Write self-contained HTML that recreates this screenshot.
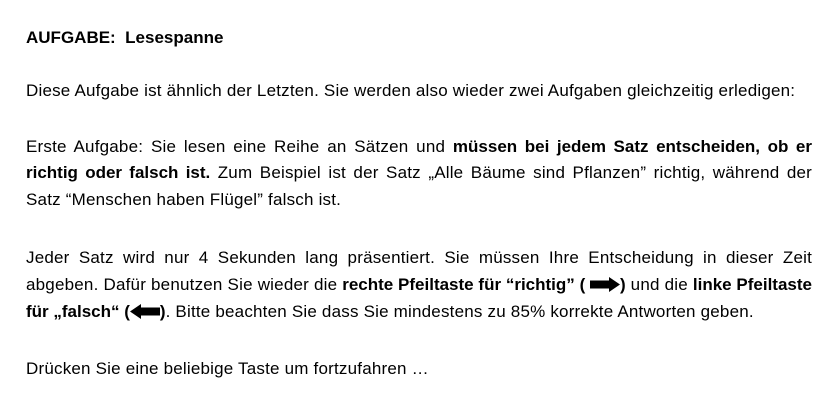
<!DOCTYPE html>
<html><head><meta charset="utf-8"><style>
body{margin:0;width:837px;height:405px;background:#fff;overflow:hidden;font-family:"Liberation Sans",Arial,sans-serif;font-size:17px;letter-spacing:0.2px;color:#000}
.l{position:absolute;left:26px;width:786px;line-height:20px;white-space:nowrap}
.j{text-align:justify;text-align-last:justify;white-space:normal}
b{font-weight:bold;letter-spacing:0}
.ar{display:inline-block;vertical-align:-2px}
</style></head><body>
<div class="l" style="top:28px"><b>AUFGABE:&nbsp; Lesespanne</b></div>
<div class="l" style="top:81px">Diese Aufgabe ist ähnlich der Letzten. Sie werden also wieder zwei Aufgaben gleichzeitig erledigen:</div>
<div class="l j" style="top:137px">Erste Aufgabe: Sie lesen eine Reihe an Sätzen und <b>müssen bei jedem Satz entscheiden, ob er</b></div>
<div class="l j" style="top:163px"><b>richtig oder falsch ist.</b> Zum Beispiel ist der Satz „Alle Bäume sind Pflanzen” richtig, während der</div>
<div class="l" style="top:190px">Satz “Menschen haben Flügel” falsch ist.</div>
<div class="l j" style="top:248px">Jeder Satz wird nur 4 Sekunden lang präsentiert. Sie müssen Ihre Entscheidung in dieser Zeit</div>
<div class="l j" style="top:275px">abgeben. Dafür benutzen Sie wieder die <b>rechte Pfeiltaste für “richtig” ( <svg class="ar" width="30" height="15" viewBox="0 0 30 15"><path d="M0 3.5h19V0l11 7.5-11 7.5v-3.5H0z"/></svg>)</b> und die <b>linke Pfeiltaste</b></div>
<div class="l" style="top:302px"><b>für „falsch“ (<svg class="ar" width="30" height="15" viewBox="0 0 30 15"><path d="M30 3.5H11V0L0 7.5 11 15v-3.5h19z"/></svg>)</b>. Bitte beachten Sie dass Sie mindestens zu 85% korrekte Antworten geben.</div>
<div class="l" style="top:359px">Drücken Sie eine beliebige Taste um fortzufahren …</div>
</body></html>
